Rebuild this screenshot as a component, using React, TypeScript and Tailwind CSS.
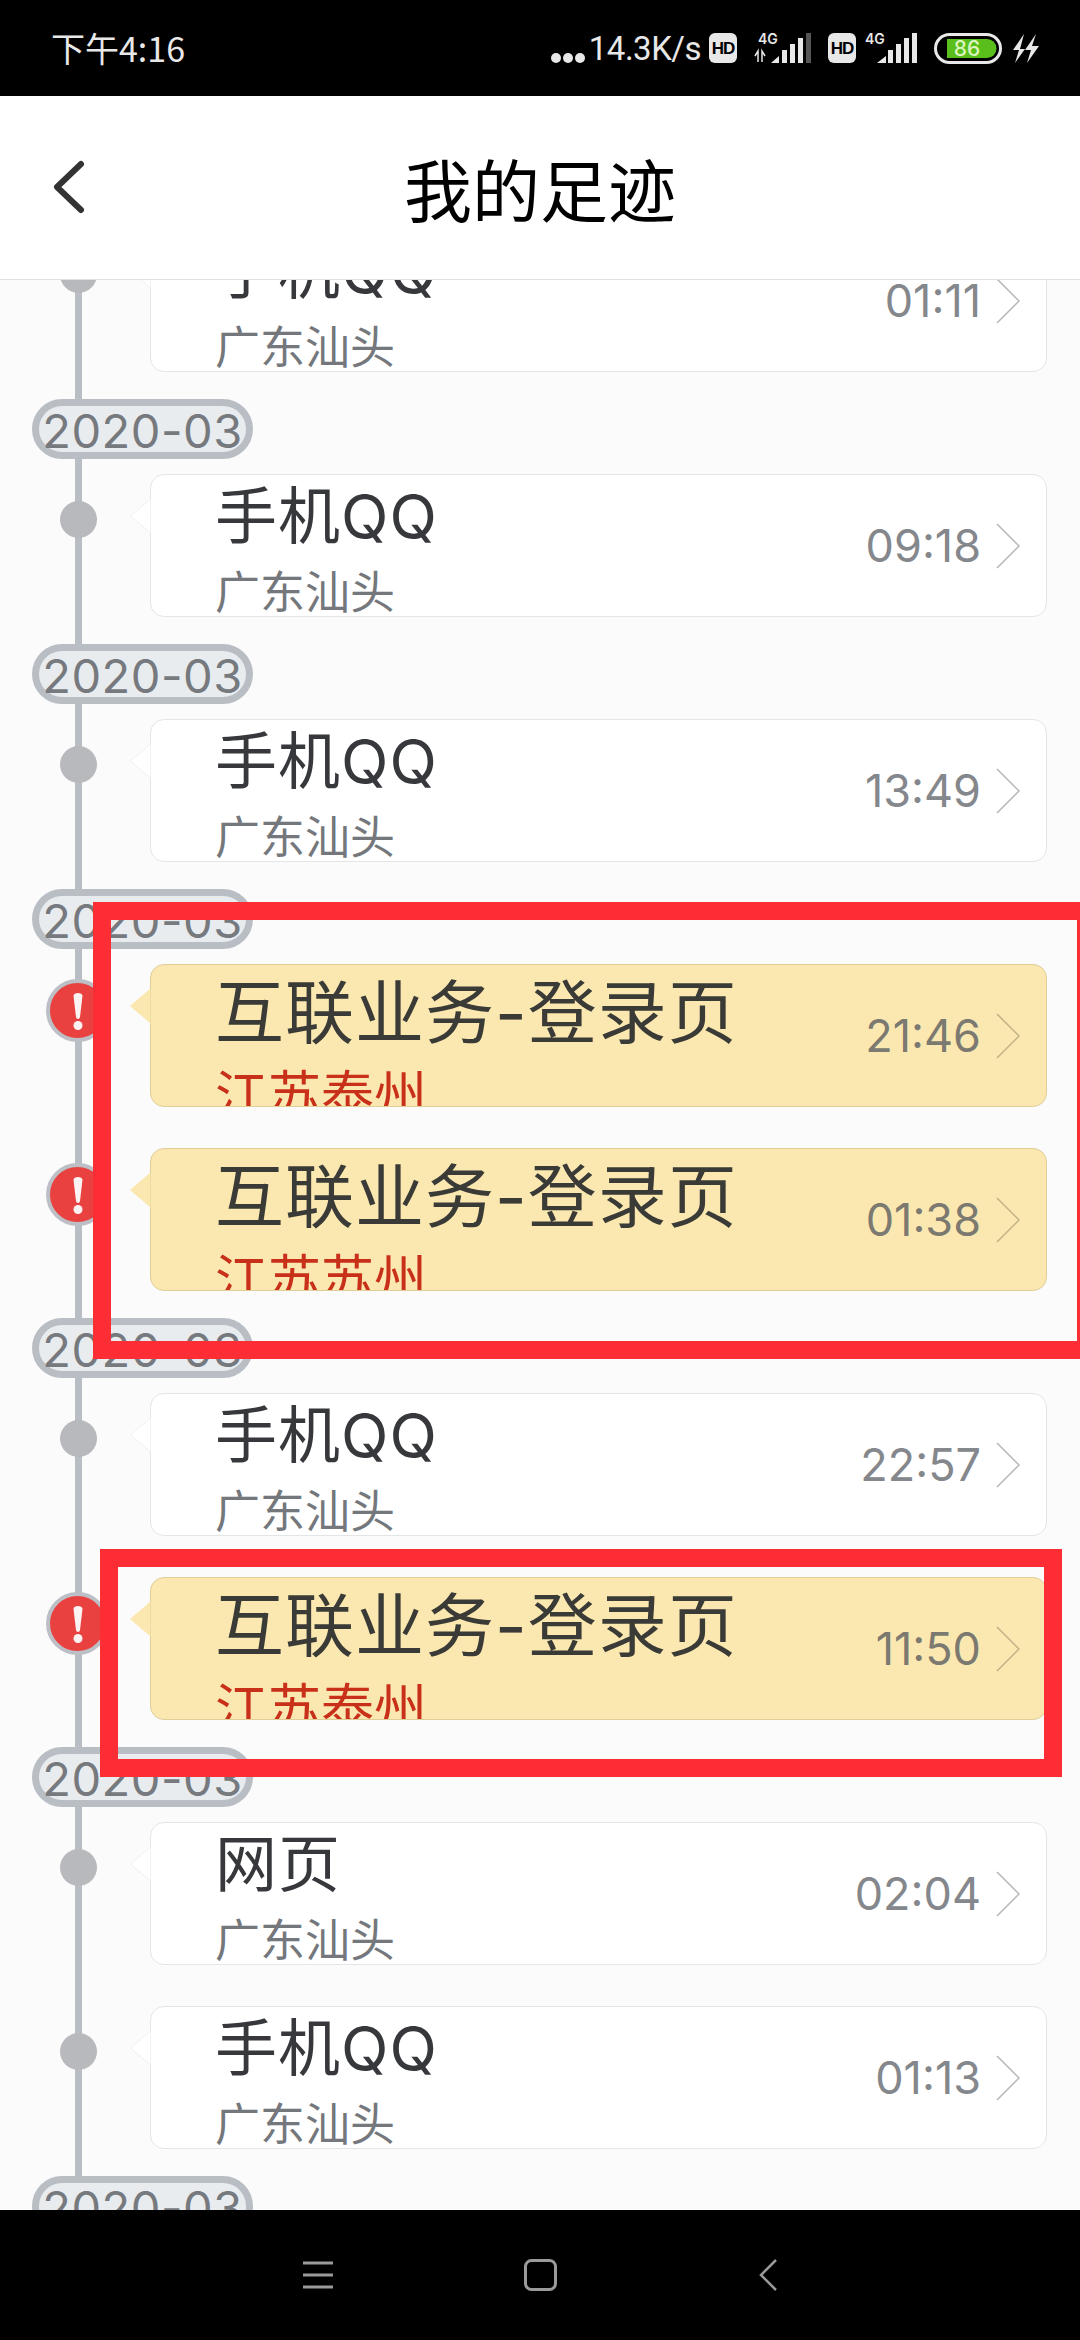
const CJK = "font-['Noto_Sans_CJK_SC','Noto_Sans',sans-serif]";
const TITLE = "font-['Inter','Noto_Sans_CJK_SC',sans-serif]";

type Item = { title: string; place: string; time: string; warn?: boolean };

const groups: Item[][] = [
  [{ title: "手机QQ", place: "广东汕头", time: "01:11" }],
  [{ title: "手机QQ", place: "广东汕头", time: "09:18" }],
  [{ title: "手机QQ", place: "广东汕头", time: "13:49" }],
  [
    { title: "互联业务-登录页", place: "江苏泰州", time: "21:46", warn: true },
    { title: "互联业务-登录页", place: "江苏苏州", time: "01:38", warn: true },
  ],
  [
    { title: "手机QQ", place: "广东汕头", time: "22:57" },
    { title: "互联业务-登录页", place: "江苏泰州", time: "11:50", warn: true },
  ],
  [
    { title: "网页", place: "广东汕头", time: "02:04" },
    { title: "手机QQ", place: "广东汕头", time: "01:13" },
  ],
];

function MonthPill() {
  return (
    <div className="relative ml-[32px] flex h-[60px] w-[221px] items-center justify-center rounded-full border-[7px] border-[#b9bec5] bg-[#e9ecef] pt-[2px]">
      <span className="font-['Inter',sans-serif] text-[47px] leading-none tracking-[0.5px] text-[#76797e]">2020-03</span>
    </div>
  );
}

function Row({ item }: { item: Item }) {
  return (
    <div className="relative flex">
      <div className="relative w-[150px] shrink-0">
        {item.warn ? (
          <div className="absolute left-[46px] top-[15px] flex h-[63px] w-[63px] items-center justify-center rounded-full border-[4px] border-[#bcc0c6] bg-[#e8413f]">
            <svg width="12" height="38" viewBox="0 0 12 38" fill="#fdf3f2">
              <path d="M1.5 4 C1.5 0 10.5 0 10.5 4 L8 25 C7.7 27.5 4.3 27.5 4 25 Z" />
              <circle cx="6" cy="33.5" r="4.5" />
            </svg>
          </div>
        ) : (
          <div className="absolute left-[60px] top-[27px] h-[37px] w-[37px] rounded-full bg-[#b7b9bc]" />
        )}
        <svg className="absolute left-[129px] top-[25px]" width="24" height="36" viewBox="0 0 24 36">
          <path
            d="M21.5 0 L1.5 17 L21.5 34"
            fill={item.warn ? "#fbe8b0" : "#ffffff"}
            stroke={item.warn ? "#fbe8b0" : "#f0f0f2"}
            strokeWidth="1"
          />
        </svg>
      </div>
      <div
        className={`flex h-[143px] w-[897px] items-center overflow-hidden rounded-[14px] border pl-[64px] ${
          item.warn ? "border-[#dfce98] bg-[#fbe8b0]" : "border-[#e4e5e7] bg-white"
        }`}
      >
        <div className="h-full min-w-0 flex-1 overflow-hidden">
          <div
            className={`${TITLE} whitespace-nowrap ${
              item.warn
                ? "mt-[3px] text-[69px] leading-[90px] tracking-[1px] text-[#3a3a36]"
                : "text-[62px] leading-[84px] tracking-[1px] text-[#36383c]"
            }`}
          >
            {item.title}
          </div>
          <div
            className={`${CJK} whitespace-nowrap ${
              item.warn ? "mt-[4px] text-[53px] leading-[60px] text-[#c9301a]" : "mt-[3px] text-[45px] leading-[56px] text-[#74777c]"
            }`}
          >
            {item.place}
          </div>
        </div>
        <span className={`font-['Inter',sans-serif] text-[45px] leading-none ${item.warn ? "text-[#7c7a70]" : "text-[#84878b]"}`}>
          {item.time}
        </span>
        <svg className="ml-[15px] mr-[26px] shrink-0" width="24" height="46" viewBox="0 0 24 46" fill="none">
          <path d="M1 1 L23 23 L1 45" stroke={item.warn ? "#bfb286" : "#b4b6b9"} strokeWidth="1.5" />
        </svg>
      </div>
    </div>
  );
}

function StatusBar() {
  return (
    <div className="flex h-[96px] items-center bg-black pl-[51px] text-[#e8e8e8]">
      <span className={`${CJK} text-[34px] leading-none`}>下午4:16</span>
      <div className="ml-auto flex items-center pr-[40px]">
        <div className="mr-[4px] flex gap-[2px] self-end pb-[2px]">
          <span className="h-[10px] w-[10px] rounded-full bg-[#e8e8e8]" />
          <span className="h-[10px] w-[10px] rounded-full bg-[#e8e8e8]" />
          <span className="h-[10px] w-[10px] rounded-full bg-[#e8e8e8]" />
        </div>
        <span className="font-['Roboto',sans-serif] text-[33px] leading-none tracking-[-0.5px]">14.3K/s</span>
        <HdBadge className="ml-[8px]" />
        <SignalOne />
        <HdBadge className="ml-[16px]" />
        <SignalTwo />
        <svg className="ml-[17px]" width="68" height="31" viewBox="0 0 68 31" fill="none">
          <rect x="1.5" y="1.5" width="65" height="28" rx="14" stroke="#e8e8e8" strokeWidth="3" />
          <path d="M13 6 H53 a9.5 9.5 0 0 1 0 19 H13 Z" fill="#5abf1a" />
          <text x="33" y="23" textAnchor="middle" fontSize="21" fontWeight="500" fontFamily="Inter" fill="#dcf5bf">86</text>
        </svg>
        <svg className="ml-[10px]" width="28" height="31" viewBox="0 0 28 31" fill="#e8e8e8">
          <path d="M12 1 L1 17 H7 L3 30 L13 16 H8 Z" />
          <path d="M24 1 L13 17 H19 L15 30 L27 13 H20 Z" />
        </svg>
      </div>
    </div>
  );
}

function HdBadge({ className }: { className: string }) {
  return (
    <div className={`flex h-[30px] w-[28px] items-center justify-center rounded-[6px] bg-[#e8e8e8] ${className}`}>
      <span className="font-['Liberation_Sans',sans-serif] text-[17px] font-bold leading-none tracking-[-1px] text-black">HD</span>
    </div>
  );
}

function SignalOne() {
  return (
    <svg className="ml-[17px]" width="58" height="30" viewBox="0 0 58 30" fill="#e8e8e8">
      <text x="4" y="11" fontSize="14" fontFamily="Inter" fontWeight="600">4G</text>
      <path d="M1 23 L4 18 V29 M8 29 V18 L11 23" stroke="#e8e8e8" strokeWidth="1.5" fill="none" />
      <path d="M17 30 L25 23 V30 Z" />
      <rect x="28" y="17" width="5" height="13" />
      <rect x="36" y="11" width="5" height="19" />
      <rect x="44" y="5" width="5" height="25" />
      <rect x="52" y="0" width="5" height="30" fill="#555555" />
    </svg>
  );
}

function SignalTwo() {
  return (
    <svg className="ml-[9px]" width="52" height="30" viewBox="0 0 52 30" fill="#e8e8e8">
      <text x="0" y="11" fontSize="14" fontFamily="Inter" fontWeight="600">4G</text>
      <path d="M12 30 L21 23 V30 Z" />
      <rect x="23" y="17" width="5" height="13" />
      <rect x="31" y="11" width="5" height="19" />
      <rect x="39" y="5" width="5" height="25" />
      <rect x="47" y="0" width="5" height="30" />
    </svg>
  );
}

export default function App() {
  return (
    <div className="flex h-[2340px] w-[1080px] flex-col overflow-hidden bg-black">
      <StatusBar />
      <header className="relative flex h-[184px] shrink-0 items-center justify-center border-b border-[#e0e0e2] bg-white">
        <svg className="absolute left-[50px] top-[62px]" width="38" height="58" viewBox="0 0 38 58" fill="none">
          <path d="M31 6 L7 29 L31 52" stroke="#333333" strokeWidth="6" strokeLinecap="round" strokeLinejoin="round" />
        </svg>
        <h1 className={`${CJK} text-[68px] font-normal leading-none text-black`}>我的足迹</h1>
      </header>

      <main className="relative h-[1930px] shrink-0 overflow-hidden bg-[#fbfbfc]">
        <div className="absolute bottom-0 left-[75px] top-0 w-[7px] bg-[#b9bec5]" />
        <div className="relative -mt-[51px] flex flex-col">
          {groups.map((rows, g) => (
            <div key={g} className="flex flex-col">
              {g > 0 && <div className="mb-[15px] mt-[27px]"><MonthPill /></div>}
              <div className="flex flex-col gap-[41px]">
                {rows.map((item, i) => (
                  <Row key={i} item={item} />
                ))}
              </div>
            </div>
          ))}
          <div className="mt-[27px]"><MonthPill /></div>
        </div>

        {/* hand-drawn annotation boxes over the screenshot */}
        <div className="absolute left-[93px] top-[622px] h-[457px] w-[1002px] border-[18px] border-[#fd2d36]" />
        <div className="absolute left-[100px] top-[1269px] h-[228px] w-[962px] border-[18px] border-[#fd2d36]" />
      </main>

      <nav className="flex h-[130px] shrink-0 items-center justify-center bg-black">
        <svg width="30" height="28" viewBox="0 0 30 28" stroke="#9a9a9a" strokeWidth="3">
          <path d="M0 2 H30 M0 14 H30 M0 26 H30" />
        </svg>
        <svg className="ml-[191px]" width="33" height="32" viewBox="0 0 33 32" fill="none">
          <rect x="1.5" y="1.5" width="30" height="29" rx="6" stroke="#9a9a9a" strokeWidth="3" />
        </svg>
        <svg className="ml-[202px]" width="18" height="32" viewBox="0 0 18 32" fill="none">
          <path d="M17 1 L2 16 L17 31" stroke="#9a9a9a" strokeWidth="2.5" />
        </svg>
      </nav>
    </div>
  );
}
